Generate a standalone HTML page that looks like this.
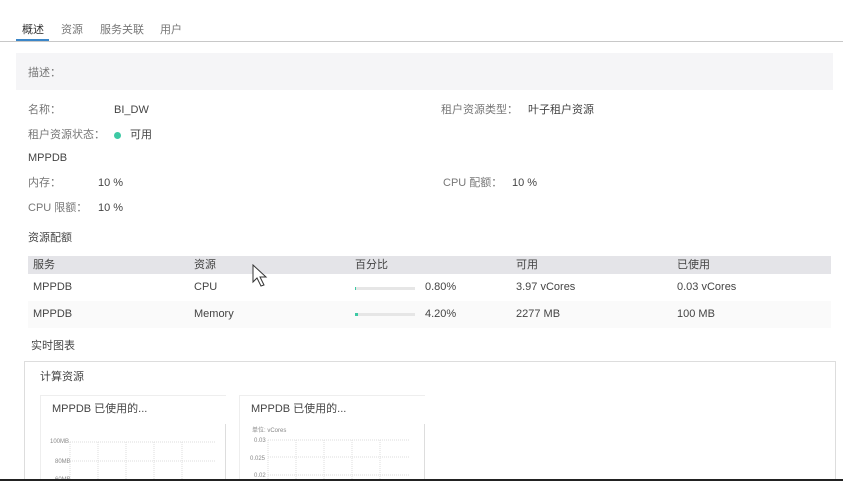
<!DOCTYPE html>
<html><head><meta charset="utf-8"><style>
html,body{margin:0;width:843px;height:481px;overflow:hidden}
body{background:#fff;font-family:"Liberation Sans","Noto Sans CJK SC",sans-serif;font-size:11px;color:#444;position:relative}
.a{position:absolute;white-space:nowrap;line-height:14px}
.g{color:#777}
</style></head><body>
<div class="a" style="left:22px;top:23px;color:#333">概述</div>
<div class="a g" style="left:61px;top:23px">资源</div>
<div class="a g" style="left:100px;top:23px">服务关联</div>
<div class="a g" style="left:160px;top:23px">用户</div>
<div style="position:absolute;left:0;top:41px;width:843px;height:1px;background:#c8c8c8"></div>
<div style="position:absolute;left:16px;top:39px;width:33px;height:2px;background:#3b86c8"></div>
<div style="position:absolute;left:16px;top:53px;width:817px;height:37px;background:#f5f5f7"></div>
<div class="a g" style="left:28px;top:66px">描述：</div>
<div class="a g" style="left:28px;top:103px">名称：</div>
<div class="a" style="left:114px;top:103px">BI_DW</div>
<div class="a g" style="left:441px;top:103px">租户资源类型：</div>
<div class="a" style="left:528px;top:103px">叶子租户资源</div>
<div class="a g" style="left:28px;top:128px">租户资源状态：</div>
<div style="position:absolute;left:114px;top:132px;width:7px;height:7px;border-radius:50%;background:#3dc9a4"></div>
<div class="a" style="left:130px;top:128px">可用</div>
<div class="a" style="left:28px;top:151px">MPPDB</div>
<div class="a g" style="left:28px;top:176px">内存：</div>
<div class="a" style="left:98px;top:176px">10 %</div>
<div class="a g" style="left:443px;top:176px">CPU 配额：</div>
<div class="a" style="left:512px;top:176px">10 %</div>
<div class="a g" style="left:28px;top:201px">CPU 限额：</div>
<div class="a" style="left:98px;top:201px">10 %</div>
<div class="a" style="left:28px;top:231px">资源配额</div>
<div style="position:absolute;left:28px;top:256px;width:803px;height:18px;background:#e4e4e8"></div>
<div style="position:absolute;left:28px;top:301px;width:803px;height:27px;background:#fafafa"></div>
<div class="a" style="left:33px;top:258px">服务</div>
<div class="a" style="left:194px;top:258px">资源</div>
<div class="a" style="left:355px;top:258px">百分比</div>
<div class="a" style="left:516px;top:258px">可用</div>
<div class="a" style="left:677px;top:258px">已使用</div>
<div class="a" style="left:33px;top:280px">MPPDB</div>
<div class="a" style="left:194px;top:280px">CPU</div>
<div style="position:absolute;left:355px;top:287px;width:60px;height:3px;background:#e6e6e6"></div>
<div style="position:absolute;left:355px;top:287px;width:1px;height:3px;background:#3dc9a4"></div>
<div class="a" style="left:425px;top:280px">0.80%</div>
<div class="a" style="left:516px;top:280px">3.97 vCores</div>
<div class="a" style="left:677px;top:280px">0.03 vCores</div>
<div class="a" style="left:33px;top:307px">MPPDB</div>
<div class="a" style="left:194px;top:307px">Memory</div>
<div style="position:absolute;left:355px;top:313px;width:60px;height:3px;background:#e6e6e6"></div>
<div style="position:absolute;left:355px;top:313px;width:3px;height:3px;background:#3dc9a4"></div>
<div class="a" style="left:425px;top:307px">4.20%</div>
<div class="a" style="left:516px;top:307px">2277 MB</div>
<div class="a" style="left:677px;top:307px">100 MB</div>
<div class="a" style="left:31px;top:339px">实时图表</div>
<div style="position:absolute;left:24px;top:361px;width:810px;height:118px;border:1px solid #ddd;border-bottom:none"></div>
<div class="a" style="left:40px;top:370px">计算资源</div>
<div style="position:absolute;left:40px;top:395px;width:185px;height:84px;border-top:1px solid #eee;border-left:1px solid #eee"></div>
<div style="position:absolute;left:225px;top:424px;width:1px;height:55px;background:#ddd"></div>
<div class="a" style="left:52px;top:402px">MPPDB 已使用的...</div>
<div style="position:absolute;left:239px;top:395px;width:185px;height:84px;border-top:1px solid #eee;border-left:1px solid #eee"></div>
<div style="position:absolute;left:424px;top:424px;width:1px;height:55px;background:#ddd"></div>
<div class="a" style="left:251px;top:402px">MPPDB 已使用的...</div>
<svg style="position:absolute;left:40px;top:425px" width="385" height="54" font-family="Liberation Sans" font-size="6" fill="#888">
<text x="10" y="18">100MB</text><text x="15" y="38">80MB</text><text x="15" y="56">60MB</text>
<g stroke="#ddd" stroke-dasharray="1,1"><line x1="30" y1="17" x2="175" y2="17"/><line x1="30" y1="36" x2="175" y2="36"/>
<line x1="30" y1="17" x2="30" y2="56"/><line x1="58" y1="17" x2="58" y2="56"/><line x1="86" y1="17" x2="86" y2="56"/><line x1="114" y1="17" x2="114" y2="56"/><line x1="142" y1="17" x2="142" y2="56"/>
<line x1="228" y1="15" x2="370" y2="15"/><line x1="228" y1="32" x2="370" y2="32"/><line x1="228" y1="50" x2="370" y2="50"/>
<line x1="228" y1="15" x2="228" y2="56"/><line x1="256" y1="15" x2="256" y2="56"/><line x1="284" y1="15" x2="284" y2="56"/><line x1="312" y1="15" x2="312" y2="56"/><line x1="340" y1="15" x2="340" y2="56"/></g>
<text x="212" y="7">单位: vCores</text><text x="214" y="17">0.03</text><text x="210" y="35">0.025</text><text x="214" y="52">0.02</text>
</svg>
<svg style="position:absolute;left:252px;top:264px" width="20" height="28"><path d="M1 1 L1 18 L5 14 L9 22 L12 21 L8 13 L14 13 Z" fill="#fff" stroke="#333" stroke-width="1"/></svg>
<div style="position:absolute;left:0;top:479px;width:843px;height:2px;background:#222"></div>
</body></html>
